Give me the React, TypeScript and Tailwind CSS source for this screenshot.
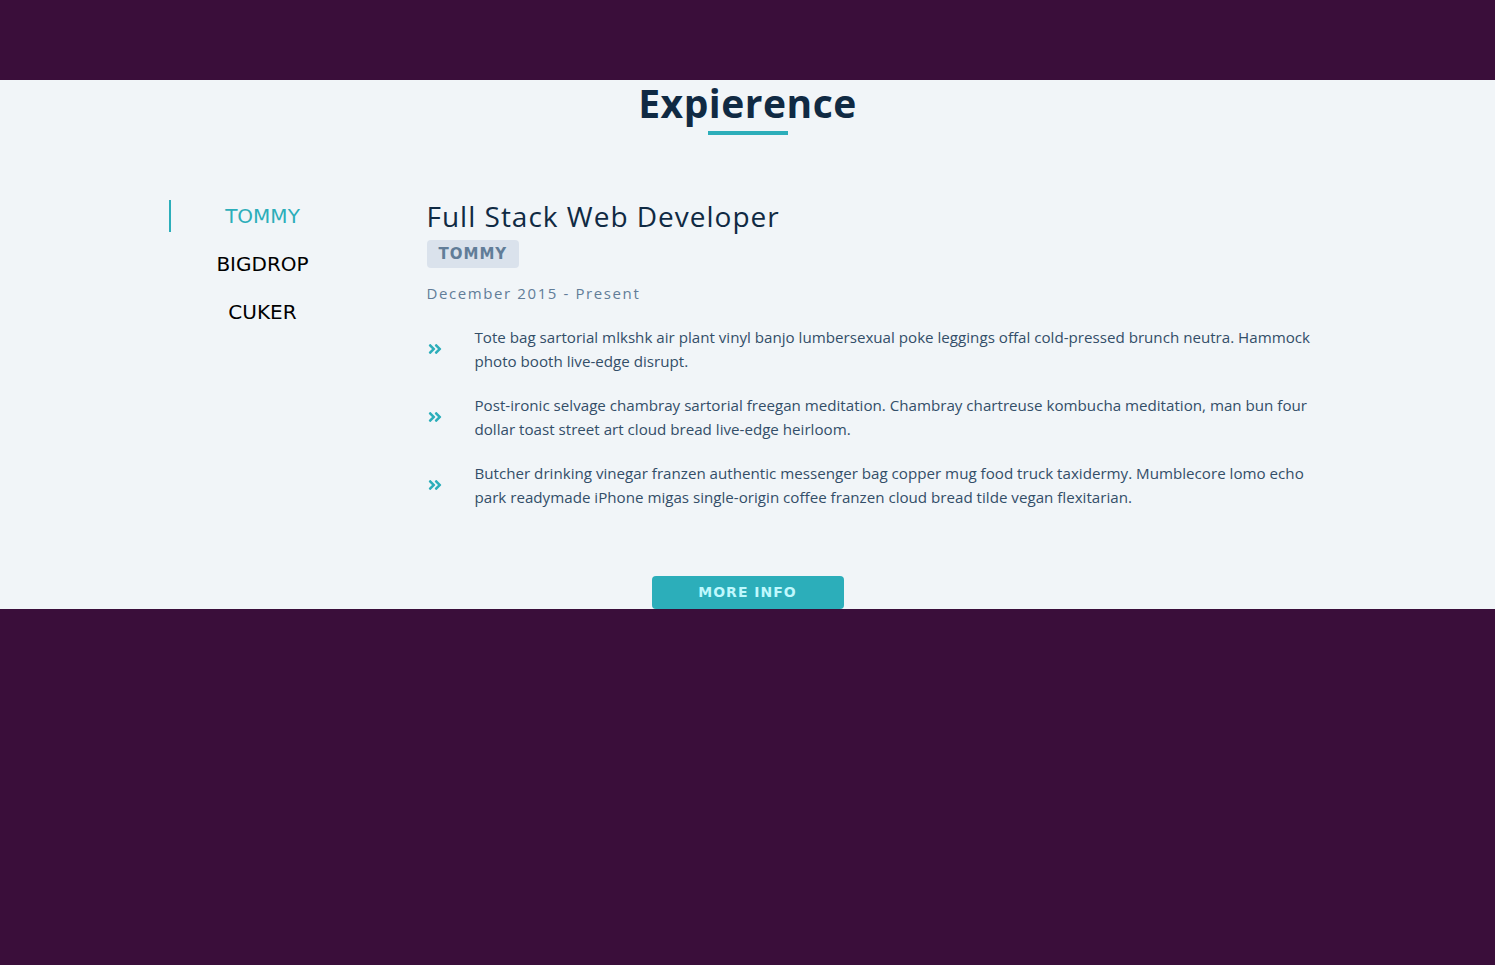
import React, { useState } from "react"
import { FaAngleDoubleRight } from "react-icons/fa"

type Job = {
  id: number
  company: string
  title: string
  dates: string
  duties: string[]
}

const jobs: Job[] = [
  {
    id: 1,
    company: "TOMMY",
    title: "Full Stack Web Developer",
    dates: "December 2015 - Present",
    duties: [
      "Tote bag sartorial mlkshk air plant vinyl banjo lumbersexual poke leggings offal cold-pressed brunch neutra. Hammock photo booth live-edge disrupt.",
      "Post-ironic selvage chambray sartorial freegan meditation. Chambray chartreuse kombucha meditation, man bun four dollar toast street art cloud bread live-edge heirloom.",
      "Butcher drinking vinegar franzen authentic messenger bag copper mug food truck taxidermy. Mumblecore lomo echo park readymade iPhone migas single-origin coffee franzen cloud bread tilde vegan flexitarian.",
    ],
  },
  {
    id: 2,
    company: "BIGDROP",
    title: "Front-End Engineer",
    dates: "May 2015 - December 2015",
    duties: [
      "Hashtag drinking vinegar scenester mumblecore snackwave four dollar toast, lumbersexual XOXO. Cardigan church-key pabst, biodiesel vexillologist viral squid.",
      "Franzen af pitchfork, mumblecore try-hard kogi XOXO roof party la croix cardigan neutra retro tattooed copper mug.",
    ],
  },
  {
    id: 3,
    company: "CUKER",
    title: "Engineering Intern",
    dates: "May 2014 - September 2015",
    duties: [
      "I'm baby woke mlkshk wolf bitters live-edge blue bottle, hammock freegan copper mug whatever cold-pressed.",
      "Pitchfork iceland la croix, sustainable glossier vaporware ennui single-origin coffee chambray.",
    ],
  },
]

const App = () => {
  const [value, setValue] = useState(0)
  const job = jobs[value]

  return (
    <div className="min-h-[965px] bg-[#3a0e3a]">
      <div className="h-20" />
      <section className="bg-[#f1f5f8] font-['Open_Sans',sans-serif]">
        <div className="flex flex-col items-center pt-[1px]">
          <h2 className="text-[39px] leading-[44px] font-bold tracking-[0.5px] text-[#102a43]">Expierence</h2>
          <div className="mt-[6px] h-1 w-20 bg-[#2caeba]" />
        </div>

        <div className="mx-auto mt-[65px] grid w-[1170px] grid-cols-[200px_1fr] gap-x-16">
          <div className="flex flex-col items-start gap-[16px]">
            {jobs.map((item, index) => (
              <button
                key={item.id}
                onClick={() => setValue(index)}
                className={`ml-[6px] h-8 w-[186px] border-l-2 font-['DejaVu_Sans',sans-serif] text-[20px] leading-8 ${
                  index === value ? "border-[#2caeba] text-[#2caeba]" : "border-transparent text-black"
                }`}
              >
                {item.company}
              </button>
            ))}
          </div>

          <article className="pt-[2px]">
            <h3 className="text-[28px] leading-[28px] tracking-[1px] text-[#102a43]">{job.title}</h3>
            <h4 className="mt-[10px] inline-block rounded bg-[#dae2ec] px-3 font-['DejaVu_Sans',sans-serif] text-[15px] leading-7 font-bold tracking-[1px] text-[#617d98]">
              {job.company}
            </h4>
            <p className="mt-[13px] text-[15px] leading-6 tracking-[1.6px] text-[#627d98]">{job.dates}</p>
            <div className="mt-[20px] flex flex-col gap-5">
              {job.duties.map((duty, index) => (
                <div key={index} className="grid grid-cols-[16px_1fr] items-center gap-x-8">
                  <FaAngleDoubleRight className="text-[#2caeba]" size={16} />
                  <p className="text-[15.15px] leading-6 text-[#334e68]">{duty}</p>
                </div>
              ))}
            </div>
          </article>
        </div>

        <div className="mt-[67px] flex justify-center">
          <button className="h-[33px] w-[192px] rounded bg-[#2caeba] font-['DejaVu_Sans',sans-serif] text-[14px] font-bold tracking-[1px] text-[#bff8fd]">
            MORE INFO
          </button>
        </div>
      </section>
    </div>
  )
}

export default App
